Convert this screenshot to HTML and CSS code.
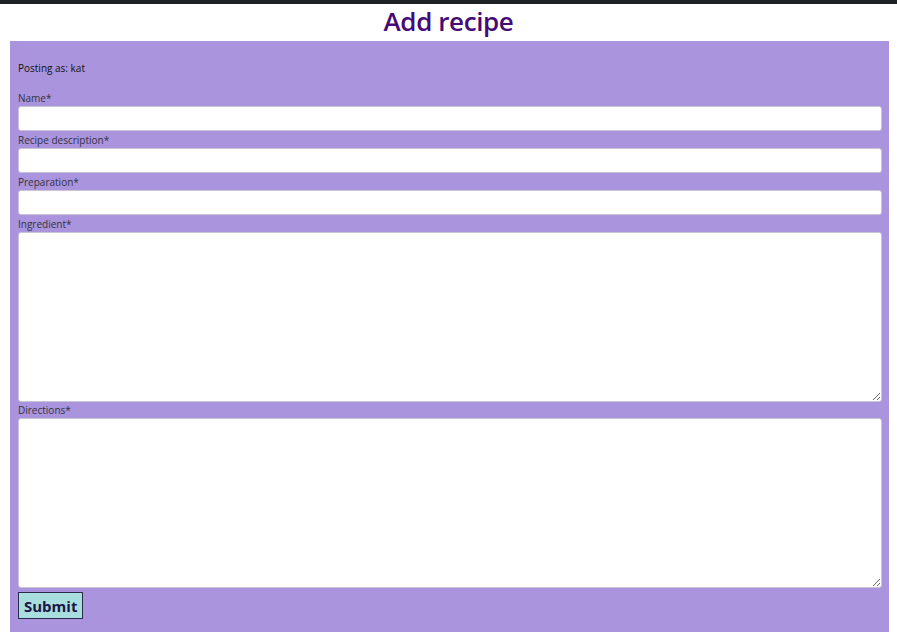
FILE: index.html
```html
<!DOCTYPE html>
<html>
<head>
<meta charset="utf-8">
<link rel="stylesheet" href="styles.css">
</head>
<body>
<div class="topbar"></div>
<h1 class="title">Add recipe</h1>
<form class="recipe-form">
  <p class="posting">Posting as: kat</p>
  <label class="field-label" for="name">Name*</label>
  <input class="field-input" id="name" type="text">
  <label class="field-label" for="desc">Recipe description*</label>
  <input class="field-input" id="desc" type="text">
  <label class="field-label" for="prep">Preparation*</label>
  <input class="field-input" id="prep" type="text">
  <label class="field-label" for="ing">Ingredient*</label>
  <textarea class="field-area" id="ing"></textarea>
  <label class="field-label field-label-tight" for="dir">Directions*</label>
  <textarea class="field-area" id="dir"></textarea>
  <div class="actions"><button class="submit" type="button">Submit</button></div>
</form>
</body>
</html>
```
FILE: styles.css
```css
html, body {
  margin: 0;
  padding: 0;
  background: #ffffff;
  font-family: "Open Sans", "Noto Sans", sans-serif;
}
.topbar {
  height: 4px;
  background: #202124;
}
.title {
  margin: 0;
  height: 37px;
  line-height: 34px;
  text-align: center;
  font-size: 26px;
  font-weight: 600;
  color: #460a78;
  letter-spacing: -0.4px;
}
.recipe-form {
  margin: 0 8px 0 10px;
  padding: 1px 7px 30px 8px;
  background: #a994dd;
  display: flex;
  flex-direction: column;
}
.posting {
  margin: 19px 0 14px;
  font-size: 10px;
  line-height: 14px;
  color: #111;
}
.field-label {
  font-size: 10px;
  line-height: 14px;
  color: #33323d;
  margin: 2px 0 1px;
}
.field-label-tight {
  margin-top: 1px;
}
.field-input {
  box-sizing: border-box;
  height: 25px;
  margin: 0;
  border: 1px solid #c9c3d6;
  border-radius: 3px;
  background: #fff;
}
.field-area {
  box-sizing: border-box;
  height: 170px;
  margin: 0;
  border: 1px solid #c9c3d6;
  border-radius: 3px;
  background: #fff;
  resize: vertical;
}
.actions {
  margin-top: 4px;
}
.submit {
  box-sizing: border-box;
  height: 27px;
  padding: 0 5px;
  background: #a8dede;
  border: 1px solid #2a2a4a;
  font-family: "Open Sans", sans-serif;
  font-weight: 700;
  font-size: 15px;
  color: #1c1545;
}
```
